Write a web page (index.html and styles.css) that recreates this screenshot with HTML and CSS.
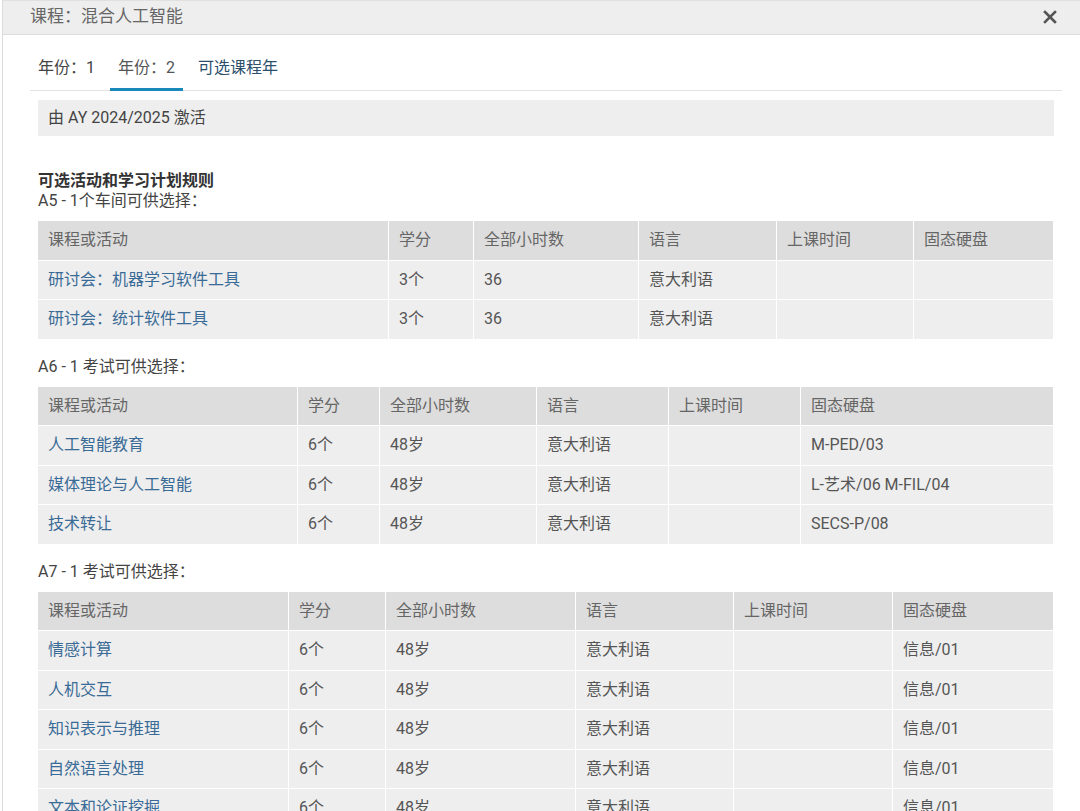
FILE: index.html
```html
<!DOCTYPE html>
<html lang="zh">
<head>
<meta charset="utf-8">
<title>课程：混合人工智能</title>
<link rel="stylesheet" href="styles.css">
</head>
<body>
<div class="modal">
  <div class="modal-header">
    <span class="modal-title">课程：混合人工智能</span>
    <span class="close" aria-label="关闭">
      <svg width="14" height="14" viewBox="0 0 14 14"><path d="M2 2 L12 12 M12 2 L2 12" stroke="#555" stroke-width="2.6" stroke-linecap="square" fill="none"/></svg>
    </span>
  </div>
  <div class="modal-body">
    <ul class="tabs">
      <li class="tab">年份：1</li>
      <li class="tab active">年份：2</li>
      <li class="tab link">可选课程年</li>
    </ul>
    <div class="pane">
      <div class="info">由 AY 2024/2025 激活</div>
      <h4 class="section-title">可选活动和学习计划规则</h4>
      <div class="rule">A5 - 1个车间可供选择：</div>
      <table class="grid t1">
        <colgroup><col><col><col><col><col><col></colgroup>
        <thead><tr><th>课程或活动</th><th>学分</th><th>全部小时数</th><th>语言</th><th>上课时间</th><th>固态硬盘</th></tr></thead>
        <tbody>
          <tr><td><a>研讨会：机器学习软件工具</a></td><td>3个</td><td>36</td><td>意大利语</td><td></td><td></td></tr>
          <tr><td><a>研讨会：统计软件工具</a></td><td>3个</td><td>36</td><td>意大利语</td><td></td><td></td></tr>
        </tbody>
      </table>
      <div class="rule gap">A6 - 1 考试可供选择：</div>
      <table class="grid t2">
        <colgroup><col><col><col><col><col><col></colgroup>
        <thead><tr><th>课程或活动</th><th>学分</th><th>全部小时数</th><th>语言</th><th>上课时间</th><th>固态硬盘</th></tr></thead>
        <tbody>
          <tr><td><a>人工智能教育</a></td><td>6个</td><td>48岁</td><td>意大利语</td><td></td><td>M-PED/03</td></tr>
          <tr><td><a>媒体理论与人工智能</a></td><td>6个</td><td>48岁</td><td>意大利语</td><td></td><td>L-艺术/06 M-FIL/04</td></tr>
          <tr><td><a>技术转让</a></td><td>6个</td><td>48岁</td><td>意大利语</td><td></td><td>SECS-P/08</td></tr>
        </tbody>
      </table>
      <div class="rule gap">A7 - 1 考试可供选择：</div>
      <table class="grid t3">
        <colgroup><col><col><col><col><col><col></colgroup>
        <thead><tr><th>课程或活动</th><th>学分</th><th>全部小时数</th><th>语言</th><th>上课时间</th><th>固态硬盘</th></tr></thead>
        <tbody>
          <tr><td><a>情感计算</a></td><td>6个</td><td>48岁</td><td>意大利语</td><td></td><td>信息/01</td></tr>
          <tr><td><a>人机交互</a></td><td>6个</td><td>48岁</td><td>意大利语</td><td></td><td>信息/01</td></tr>
          <tr><td><a>知识表示与推理</a></td><td>6个</td><td>48岁</td><td>意大利语</td><td></td><td>信息/01</td></tr>
          <tr><td><a>自然语言处理</a></td><td>6个</td><td>48岁</td><td>意大利语</td><td></td><td>信息/01</td></tr>
          <tr><td><a>文本和论证挖掘</a></td><td>6个</td><td>48岁</td><td>意大利语</td><td></td><td>信息/01</td></tr>
        </tbody>
      </table>
    </div>
  </div>
</div>
</body>
</html>
```
FILE: styles.css
```css
html, body {
  margin: 0;
  padding: 0;
  background: #fff;
  overflow: hidden;
}
body {
  font-family: Roboto, "Noto Sans CJK SC", sans-serif;
  font-size: 16px;
  color: #555;
}
.modal {
  margin-left: 2px;
  border-left: 1px solid #dcdcdc;
  min-height: 811px;
}
.modal-header {
  height: 33px;
  background: #eeeeee;
  border-top: 1px solid #e0e0e0;
  border-bottom: 1px solid #dddddd;
  display: flex;
  align-items: center;
  justify-content: space-between;
  padding: 0 23px 0 27px;
}
.modal-title {
  font-size: 17px;
  color: #666;
  line-height: 20px;
  margin-top: -3px;
}
.close {
  display: flex;
  align-items: center;
  margin-top: -2px;
}
.modal-body {
  padding: 0 18px 0 27px;
}
.tabs {
  list-style: none;
  margin: 0;
  padding: 13px 0 0;
  display: flex;
  border-bottom: 1px solid #e2e2e2;
}
.tab {
  padding: 10px 8px 10px;
  margin-right: 7px;
  margin-bottom: -1px;
  line-height: 20px;
  color: #444;
  border-bottom: 3px solid transparent;
}
.tab.active {
  color: #555;
  border-bottom-color: #1b88ba;
}
.tab.link {
  color: #2c4f6c;
}
.pane {
  padding: 9px 8px 0;
}
.info {
  background: #eeeeee;
  height: 36px;
  line-height: 36px;
  padding: 0 10px;
  color: #444;
}
.section-title {
  margin: 35px 0 0;
  font-size: 16px;
  font-weight: bold;
  line-height: 20px;
  color: #333;
}
.rule {
  line-height: 20px;
  color: #444;
}
.rule.gap {
  margin-top: 17px;
}
.grid {
  width: 100%;
  margin-top: 10px;
  border-collapse: separate;
  border-spacing: 0;
  table-layout: fixed;
}
.grid th, .grid td {
  text-align: left;
  font-weight: normal;
  padding: 9px 10px;
  line-height: 20.5px;
  border-right: 1px solid #fff;
  border-bottom: 1px solid #fff;
  white-space: nowrap;
  overflow: hidden;
}
.grid th {
  background: #dddddd;
  color: #666;
}
.grid td {
  background: #eeeeee;
  color: #555;
}
.grid a {
  color: #3a6b96;
  text-decoration: none;
}
.t1 col:nth-child(1) { width: 351px; }
.t1 col:nth-child(2) { width: 85px; }
.t1 col:nth-child(3) { width: 165px; }
.t1 col:nth-child(4) { width: 138px; }
.t1 col:nth-child(5) { width: 137px; }
.t2 col:nth-child(1) { width: 260px; }
.t2 col:nth-child(2) { width: 82px; }
.t2 col:nth-child(3) { width: 157px; }
.t2 col:nth-child(4) { width: 132px; }
.t2 col:nth-child(5) { width: 132px; }
.t3 col:nth-child(1) { width: 251px; }
.t3 col:nth-child(2) { width: 97px; }
.t3 col:nth-child(3) { width: 190px; }
.t3 col:nth-child(4) { width: 158px; }
.t3 col:nth-child(5) { width: 159px; }
```
